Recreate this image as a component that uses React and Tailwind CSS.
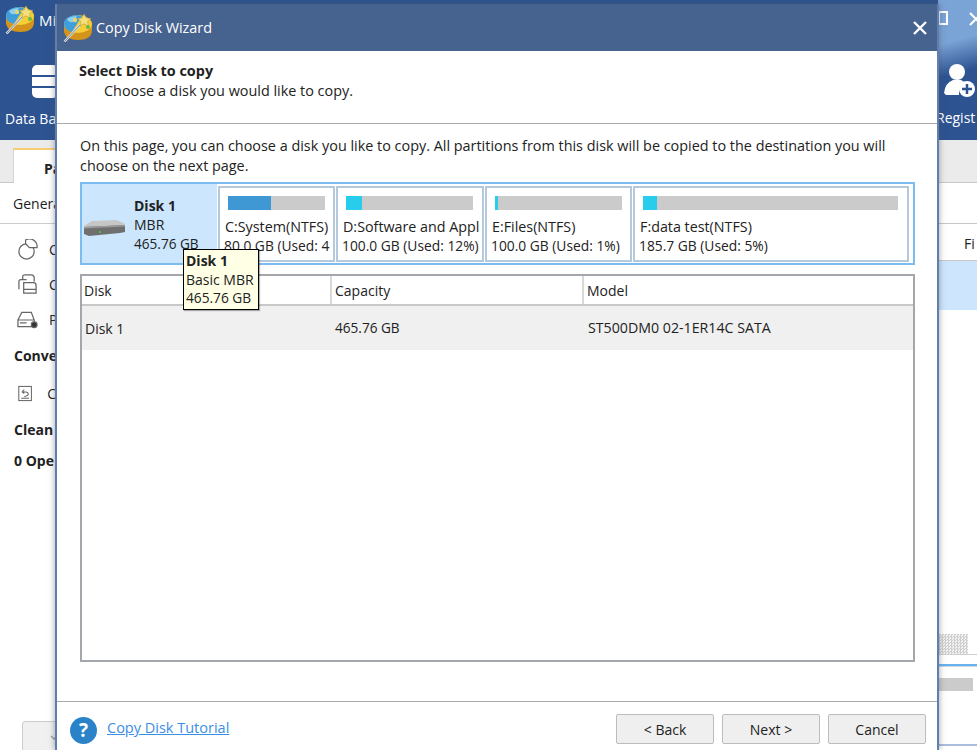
const uiFont = { fontFamily: '"Open Sans", "Noto Sans", sans-serif' };

function WandLogo({ className }) {
  return (
    <svg viewBox="0 0 30 28" className={className}>
      <path d="M1 9 L1 18 Q3 26 15 26 Q28 26 29 17 L29 9 Z" fill="#d4941c" />
      <ellipse cx="15" cy="10" rx="14" ry="9" fill="#f5cd35" />
      <path d="M1 10 Q1 2 14 1 L19 2 L9 18 Q1 16 1 10 Z" fill="#3f9fdc" />
      <path d="M4 5 Q8 2 14 2 L10 8 Q6 9 4 5 Z" fill="#8fd0ee" />
      <path d="M1.5 27.5 L20 8" stroke="#dfe3e4" strokeWidth="2.4" />
      <path d="M1.5 27.5 L20 8" stroke="#7d8486" strokeWidth="1" />
      <path d="M21 0 l2.3 4 l4.7 .6 l-3.4 3 l1 4.6 l-4.6-2.4 l-4 2.4 l1-4.6 l-3.4-3 l4.6-.6 Z" fill="#f4e07a" stroke="#b99a3a" strokeWidth=".6" />
      <circle cx="12" cy="6" r="2.2" fill="#e6d66c" />
      <circle cx="25" cy="13" r="2" fill="#63bb45" />
    </svg>
  );
}

function DiskIcon() {
  return (
    <svg viewBox="0 0 41 16" className="w-[41px] h-[16px] mt-[8px] shrink-0">
      <path d="M0 6 L8 1 L33 0 L41 4 L41 7 L0 9 Z" fill="#c6c6c6" />
      <path d="M0 7 L41 5 L41 12 L36 13 L5 16 L0 14 Z" fill="#6f6f6f" />
      <path d="M0 7 L41 5 L41 6.5 L0 8.5 Z" fill="#9a9a9a" />
      <rect x="15" y="11" width="2" height="2" fill="#48c048" />
    </svg>
  );
}

function PartitionBox({ name, size, color, used, width, barWidth }) {
  return (
    <div className={`${width} h-[76px] shrink-0 bg-white border-2 border-[#b4c9dc] pl-[5px] pt-[8px] overflow-hidden`}>
      <div className={`${barWidth} ml-[3px] h-[14px] bg-[#cbcbcb] flex`}>
        <div className={`${used} h-full ${color}`}></div>
      </div>
      <div className="mt-[7px] text-[14.3px] leading-[19px] whitespace-nowrap overflow-hidden text-[#222]">{name}</div>
      <div className="ml-[-1px] text-[13.8px] leading-[19px] whitespace-nowrap overflow-hidden text-[#222]">{size}</div>
    </div>
  );
}

function SideRow({ label, children }) {
  return (
    <div className="h-[21px] flex items-center gap-[11px] text-[14px] text-[#222]">
      <div className="w-[21px] flex justify-center">{children}</div>
      <span>{label}</span>
    </div>
  );
}

function BackgroundApp() {
  return (
    <div className="h-full flex flex-col bg-white text-[#222]">
      <div className="h-[140px] shrink-0 bg-[#2d5391] flex justify-between text-white">
        <div className="pl-[5px] pt-[5px] w-[56px]">
          <div className="flex items-center gap-[4px] h-[30px]">
            <WandLogo className="w-[30px] h-[28px] shrink-0" />
            <span className="text-[15px]">Mi</span>
          </div>
          <div className="mt-[30px] ml-[27px] w-[26px] flex flex-col gap-[2px]">
            <div className="h-[10px] bg-white rounded-t-[5px]"></div>
            <div className="h-[9px] bg-white"></div>
            <div className="h-[10px] bg-white rounded-b-[5px]"></div>
          </div>
          <div className="mt-[10px] text-[14px] whitespace-nowrap">Data Ba</div>
        </div>
        <div className="w-[39px] relative bg-[linear-gradient(165deg,#7aa3d6_30%,#2d5391_52%)]">
          <div className="absolute left-[0px] top-[11px] w-[10px] h-[14px] border-2 border-white"></div>
          <svg viewBox="0 0 14 14" className="absolute left-[31px] top-[12px] w-[14px] h-[14px]" stroke="#fff" strokeWidth="2.2">
            <path d="M1 1 L13 13 M13 1 L1 13" />
          </svg>
          <svg viewBox="0 0 32 34" className="absolute left-[6px] top-[63px] w-[32px] h-[34px]">
            <circle cx="13" cy="9" r="8" fill="#fff" />
            <path d="M0 30 Q1 20 9 17 L17 17 Q21 19 22 21 Q14 24 15 32 L2 32 Z" fill="#fff" />
            <circle cx="23" cy="26" r="8" fill="#fff" />
            <path d="M23 21 V31 M18 26 H28" stroke="#2d5391" strokeWidth="2.5" />
          </svg>
          <div className="absolute left-[-2px] top-[107px] text-[14px]">Regist</div>
        </div>
      </div>
      <div className="h-[43px] shrink-0 bg-[#ebebeb] flex border-b border-[#c8c8c8]">
        <div className="ml-[13px] mt-[8px] w-[60px] h-[35px] bg-white border-t-2 border-l border-t-[#f7cd72] border-l-[#d4d4d4] pl-[30px] pt-[8px] text-[14px] font-bold">Pa</div>
      </div>
      <div className="flex-1 flex justify-between">
        <div className="w-[56px] overflow-hidden">
          <div className="h-[41px] border-b border-[#ccc] pl-[13px] pt-[10px] text-[14px] whitespace-nowrap">General</div>
          <div className="pl-[17px] pt-[15px] flex flex-col gap-[14px]">
            <SideRow label="C">
              <svg viewBox="0 0 22 22" className="w-[21px] h-[21px]" fill="none" stroke="#666" strokeWidth="1.3">
                <circle cx="10" cy="13" r="8" />
                <path d="M9 1 A8 8 0 0 1 21 9 L13 9 L9 5 Z" fill="#fff" />
              </svg>
            </SideRow>
            <SideRow label="C">
              <svg viewBox="0 0 22 22" className="w-[21px] h-[21px]" fill="none" stroke="#666" strokeWidth="1.3">
                <path d="M6 6 V3 Q6 1 8 1 H15 Q17 1 18 3 V8 M2 16 V8 Q2 6 4 6 H10" />
                <path d="M7 9 H17 Q20 9 20 12 V20 H7 Z M7 16 H20" fill="#fff" />
              </svg>
            </SideRow>
            <SideRow label="P">
              <svg viewBox="0 0 22 18" className="w-[21px] h-[18px]" fill="none" stroke="#666" strokeWidth="1.3">
                <path d="M1 9 L5 1 H15 L18 9 M1 9 H18 V16 H1 Z" />
                <circle cx="18" cy="14" r="3" fill="#333" />
                <path d="M3 12 H10" />
              </svg>
            </SideRow>
          </div>
          <div className="pl-[14px] mt-[15px] text-[14px] font-bold">Conve</div>
          <div className="pl-[18px] mt-[18px] h-[19px] flex items-center gap-[15px] text-[14px]">
            <svg viewBox="0 0 18 20" className="w-[17px] h-[19px]" fill="none" stroke="#666" strokeWidth="1.3">
              <rect x="1" y="1" width="16" height="18" />
              <path d="M5 8 L8 5 M5 8 L8 10 M5 8 H10 Q13 8 13 11 Q13 13 8 14 M4 16 H14" />
            </svg>
            <span>C</span>
          </div>
          <div className="pl-[14px] mt-[16px] text-[14px] font-bold">Clean</div>
          <div className="pl-[14px] mt-[10px] text-[14px] font-bold whitespace-nowrap">0 Ope</div>
          <div className="ml-[22px] mt-[250px] w-[60px] h-[40px] bg-[#f0f0f0] border border-[#ccc] rounded-[3px] pl-[27px] pt-[13px]">
            <svg viewBox="0 0 8 5" className="w-[8px] h-[5px]" fill="none" stroke="#999" strokeWidth="1.3">
              <path d="M1 1 L4 4 L7 1" />
            </svg>
          </div>
        </div>
        <div className="w-[39px] overflow-hidden">
          <div className="h-[41px] border-b border-[#c8c8c8]"></div>
          <div className="h-[37px] border-b border-[#c8c8c8] pl-[26px] pt-[9px] text-[14px]">Fi</div>
          <div className="h-[49px] bg-[#cde6fd]"></div>
          <div className="mt-[324px] w-[30px] h-[20px] bg-[repeating-conic-gradient(#cfcfcf_0_25%,#f2f2f2_0_50%)] bg-[length:3px_3px]"></div>
          <div className="h-[1px] bg-[#cfcfcf]"></div>
          <div className="mt-[9px] h-[3px] bg-[#69b2f0] border-b border-[#cfd8e0]"></div>
          <div className="mt-[11px] w-[35px] h-[13px] bg-[#cbcbcb]"></div>
          <div className="mt-[53px] h-[2px] bg-[#a9bedc]"></div>
        </div>
      </div>
    </div>
  );
}

function WizardButton({ children }) {
  return (
    <button className="w-[98px] h-[30px] bg-[#efefef] border border-[#bcbcbc] rounded-[2px] text-[14px] text-[#222]">
      {children}
    </button>
  );
}

export default function App() {
  return (
    <div className="relative w-[977px] h-[750px] overflow-hidden" style={uiFont}>
      <BackgroundApp />

      {/* wizard dialog over the main window */}
      <div className="absolute left-[55px] top-[4px] w-[884px] h-[746px] flex flex-col bg-white border-x-2 border-[#5e7fb0] shadow-[0_0_6px_rgba(80,80,95,0.55)]">
        <div className="h-[47px] shrink-0 bg-[#46628f] flex items-center justify-between text-white pl-[6px] pr-[9px] pt-[1px]">
          <div className="flex items-center gap-[3px]">
            <WandLogo className="w-[30px] h-[28px]" />
            <span className="text-[14.4px]">Copy Disk Wizard</span>
          </div>
          <svg viewBox="0 0 16 16" className="w-[16px] h-[16px]" stroke="#fff" strokeWidth="2.4">
            <path d="M2 2 L14 14 M14 2 L2 14" />
          </svg>
        </div>

        <div className="h-[73px] shrink-0 border-b border-[#aaa] pl-[22px] pt-[10px] text-[14.4px] leading-[20px] text-[#222]">
          <div className="font-bold">Select Disk to copy</div>
          <div className="pl-[25px]">Choose a disk you would like to copy.</div>
        </div>

        <div className="flex-1 flex flex-col pl-[23px] pr-[22px]">
          <p className="mt-[12px] text-[14.4px] leading-[20px] text-[#222] whitespace-nowrap">
            On this page, you can choose a disk you like to copy. All partitions from this disk will be copied to the destination you will
            <br />
            choose on the next page.
          </p>
          <div className="mt-[6px] h-[83px] flex items-center gap-[1px] bg-white border-2 border-[#7dbcf0]">
            <div className="w-[135px] h-full shrink-0 bg-[#cbe6fd] flex items-center pl-[2px] text-[14px] leading-[19px] text-[#222]">
              <DiskIcon />
              <div className="ml-[9px] mt-[2px] whitespace-nowrap">
                <div className="font-bold">Disk 1</div>
                <div>MBR</div>
                <div className="text-[13.6px]">465.76 GB</div>
              </div>
            </div>
            <PartitionBox name="C:System(NTFS)" size="80.0 GB (Used: 4" color="bg-[#3f98d3]" used="w-[43px]" width="w-[117px]" barWidth="w-[97px]" />
            <PartitionBox name="D:Software and Appl" size="100.0 GB (Used: 12%)" color="bg-[#29cdec]" used="w-[16px]" width="w-[148px]" barWidth="w-[127px]" />
            <PartitionBox name="E:Files(NTFS)" size="100.0 GB (Used: 1%)" color="bg-[#29cdec]" used="w-[3px]" width="w-[147px]" barWidth="w-[127px]" />
            <PartitionBox name="F:data test(NTFS)" size="185.7 GB (Used: 5%)" color="bg-[#29cdec]" used="w-[14px]" width="w-[276px]" barWidth="w-[255px]" />
          </div>

          <div className="mt-[9px] h-[388px] border-2 border-[#a3a7ac] text-[14px] text-[#222]">
            <div className="h-[30px] flex items-stretch border-b-2 border-[#c8c8c8]">
              <div className="w-[250px] flex items-center border-r-2 border-[#d8d8d8] pl-[2px]">Disk</div>
              <div className="w-[252px] flex items-center border-r-2 border-[#d8d8d8] pl-[3px]">Capacity</div>
              <div className="flex items-center pl-[3px]">Model</div>
            </div>
            <div className="h-[44px] flex items-center bg-[#f0f0f0]">
              <div className="w-[250px] pl-[3px]">Disk 1</div>
              <div className="w-[252px] pl-[3px] text-[13.6px]">465.76 GB</div>
              <div className="pl-[4px] text-[14.2px]">ST500DM0 02-1ER14C SATA</div>
            </div>
          </div>
        </div>

        <div className="h-[49px] shrink-0 border-t border-[#aaa] flex items-start justify-between pl-[13px] pr-[11px] pt-[12px]">
          <div className="flex items-center gap-[10px] mt-[3px]">
            <div className="w-[27px] h-[27px] rounded-full bg-[#2a83c9] flex items-center justify-center text-white text-[19px] font-bold">?</div>
            <a href="#" className="text-[14.5px] text-[#3a8ee6] underline mt-[-5px]">Copy Disk Tutorial</a>
          </div>
          <div className="flex gap-[8px]">
            <WizardButton>{'< Back'}</WizardButton>
            <WizardButton>{'Next >'}</WizardButton>
            <WizardButton>Cancel</WizardButton>
          </div>
        </div>
      </div>

      {/* tooltip over the disk row */}
      <div className="absolute left-[183px] top-[249px] w-[76px] h-[61px] bg-[#ffffe6] border border-black shadow-[1px_1px_1px_rgba(0,0,0,0.3)] pl-[2px] pt-[2px] text-[14px] leading-[18.5px] text-[#222]">
        <div className="font-bold">Disk 1</div>
        <div className="whitespace-nowrap">Basic MBR</div>
        <div className="text-[13.7px]">465.76 GB</div>
      </div>
    </div>
  );
}
